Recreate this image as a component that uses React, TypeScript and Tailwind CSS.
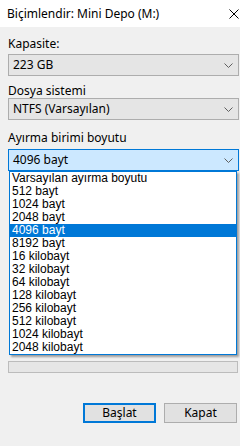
const sizes = [
  "Varsayılan ayırma boyutu",
  "512 bayt",
  "1024 bayt",
  "2048 bayt",
  "4096 bayt",
  "8192 bayt",
  "16 kilobayt",
  "32 kilobayt",
  "64 kilobayt",
  "128 kilobayt",
  "256 kilobayt",
  "512 kilobayt",
  "1024 kilobayt",
  "2048 kilobayt",
];

function Chevron() {
  return (
    <svg width="9" height="5" viewBox="0 0 9 5" className="shrink-0">
      <polyline points="0.5,0.5 4.5,4.5 8.5,0.5" fill="none" stroke="#5f5f5f" strokeWidth="1" />
    </svg>
  );
}

function CloseIcon() {
  return (
    <svg width="10" height="10" viewBox="0 0 10 10" className="shrink-0">
      <path d="M0.5 0.5 9.5 9.5 M9.5 0.5 0.5 9.5" stroke="#000" strokeWidth="1" fill="none" />
    </svg>
  );
}

function Combo({ value, open }: { value: string; open?: boolean }) {
  return (
    <div
      className={
        open
          ? "flex h-[22px] items-center justify-between border border-[#0078d7] bg-[#cce8ff] pl-[4px] pr-[5px]"
          : "flex h-[22px] items-center justify-between border border-[#adadad] bg-[#e5e5e5] pl-[4px] pr-[5px]"
      }
    >
      <span>{value}</span>
      <Chevron />
    </div>
  );
}

export default function App() {
  const selected = "4096 bayt";
  return (
    <div className="h-[446px] w-[240px] overflow-hidden bg-[#f0f0f0] text-[12px] text-black [font-family:'Noto_Sans',sans-serif]">
      <div className="flex h-[27px] items-center justify-between bg-white pl-[7px] pr-[1px]">
        <span className="leading-4">Biçimlendir: Mini Depo (M:)</span>
        <CloseIcon />
      </div>

      <div className="pl-[8px] pr-[1px] pt-[10px]">
        <div className="h-[14px] leading-[14px]">Kapasite:</div>
        <div className="mt-[3px]">
          <Combo value="223 GB" />
        </div>

        <div className="mt-[8px] h-[14px] leading-[14px]">Dosya sistemi</div>
        <Combo value="NTFS (Varsayılan)" />

        <div className="mt-[11px] h-[14px] leading-[14px]">Ayırma birimi boyutu</div>
        <div className="relative mt-[4px]">
          <Combo value={selected} open />
          <ul className="absolute left-[1px] right-[2px] top-full z-10 border border-[#0078d7] bg-white text-[12px] shadow-[2px_2px_2px_rgba(0,0,0,0.35)] [font-family:'Liberation_Sans',Arial,sans-serif]">
            {sizes.map((s) => (
              <li
                key={s}
                className={
                  s === selected
                    ? "h-[13px] bg-[#0078d7] pl-[2px] leading-[13px] text-white"
                    : "h-[13px] pl-[2px] leading-[13px]"
                }
              >
                {s}
              </li>
            ))}
          </ul>
        </div>

        <div className="mr-[1px] mt-[190px] h-[12px] border border-[#bcbcbc] bg-[#e6e6e6]" />

        <div className="mt-[30px] flex justify-end gap-[8px] pr-[2px]">
          <button className="h-[20px] w-[73px] border-2 border-[#0078d7] bg-[#e1e1e1] leading-none">
            Başlat
          </button>
          <button className="h-[20px] w-[73px] border border-[#adadad] bg-[#e1e1e1] leading-none">
            Kapat
          </button>
        </div>
      </div>
    </div>
  );
}
